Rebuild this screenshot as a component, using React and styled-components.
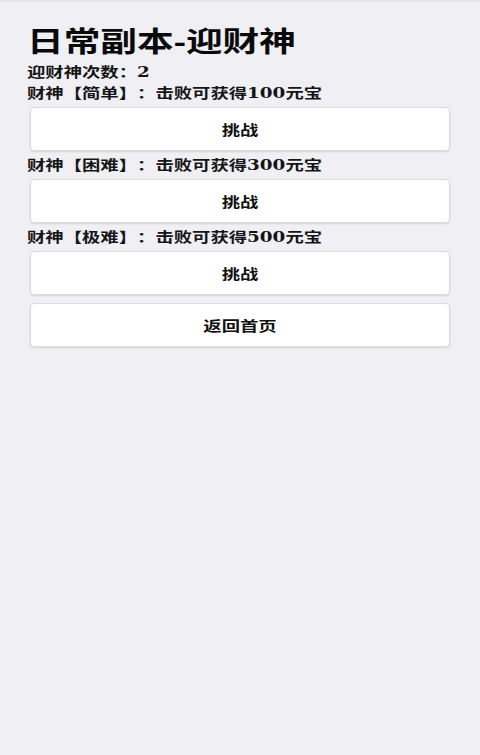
import React from 'react'
import styled, { createGlobalStyle } from 'styled-components'

const GlobalStyle = createGlobalStyle`
  html, body {
    margin: 0;
    padding: 0;
    background: #efeff4;
  }
  body {
    font-family: "Liberation Serif", "Noto Sans CJK SC", serif;
    color: #111;
    text-spacing-trim: space-all;
  }
`

const Page = styled.div`
  min-height: 755px;
  box-sizing: border-box;
  border-top: 2px solid #e3e3e8;
  padding: 25px 30px 0 27px;
  display: flex;
  flex-direction: column;
`

// the screen text is drawn wide, so glyphs get a horizontal stretch
const Wide = styled.span`
  display: inline-block;
  white-space: nowrap;
  transform: scaleX(1.31);
  transform-origin: ${({ $center }) => ($center ? 'center' : 'left')} center;
`

const Title = styled.h1`
  margin: 0 0 3px 0;
  font-family: "Liberation Sans", "Noto Sans CJK SC", sans-serif;
  font-size: 28px;
  line-height: 32px;
  font-weight: 700;
  color: #0a0a0a;
`

const Line = styled.div`
  font-family: "DejaVu Serif", "Noto Sans CJK SC", serif;
  font-size: 14px;
  line-height: 21px;
  font-weight: 700;
  color: #151515;
`

const Button = styled.button`
  display: block;
  box-sizing: border-box;
  width: calc(100% - 3px);
  height: 44px;
  margin: ${({ $last }) => ($last ? '4px 0 4px 3px' : '3px 0 4px 3px')};
  background: #fff;
  border: 1px solid #dcdcdc;
  border-radius: 4px;
  box-shadow: 0 1px 2px rgba(0, 0, 0, 0.12);
  font-family: "Liberation Sans", "Noto Sans CJK SC", sans-serif;
  font-size: 14px;
  font-weight: 700;
  color: #111;
  cursor: pointer;
`

const levels = [
  { name: '简单', reward: 100 },
  { name: '困难', reward: 300 },
  { name: '极难', reward: 500 },
]

export default function App() {
  return (
    <>
      <GlobalStyle />
      <Page>
        <Title><Wide>日常副本-迎财神</Wide></Title>
        <Line><Wide>迎财神次数：2</Wide></Line>
        {levels.map(l => (
          <React.Fragment key={l.name}>
            <Line><Wide>财神【{l.name}】：击败可获得{l.reward}元宝</Wide></Line>
            <Button><Wide $center>挑战</Wide></Button>
          </React.Fragment>
        ))}
        <Button $last><Wide $center>返回首页</Wide></Button>
      </Page>
    </>
  )
}
